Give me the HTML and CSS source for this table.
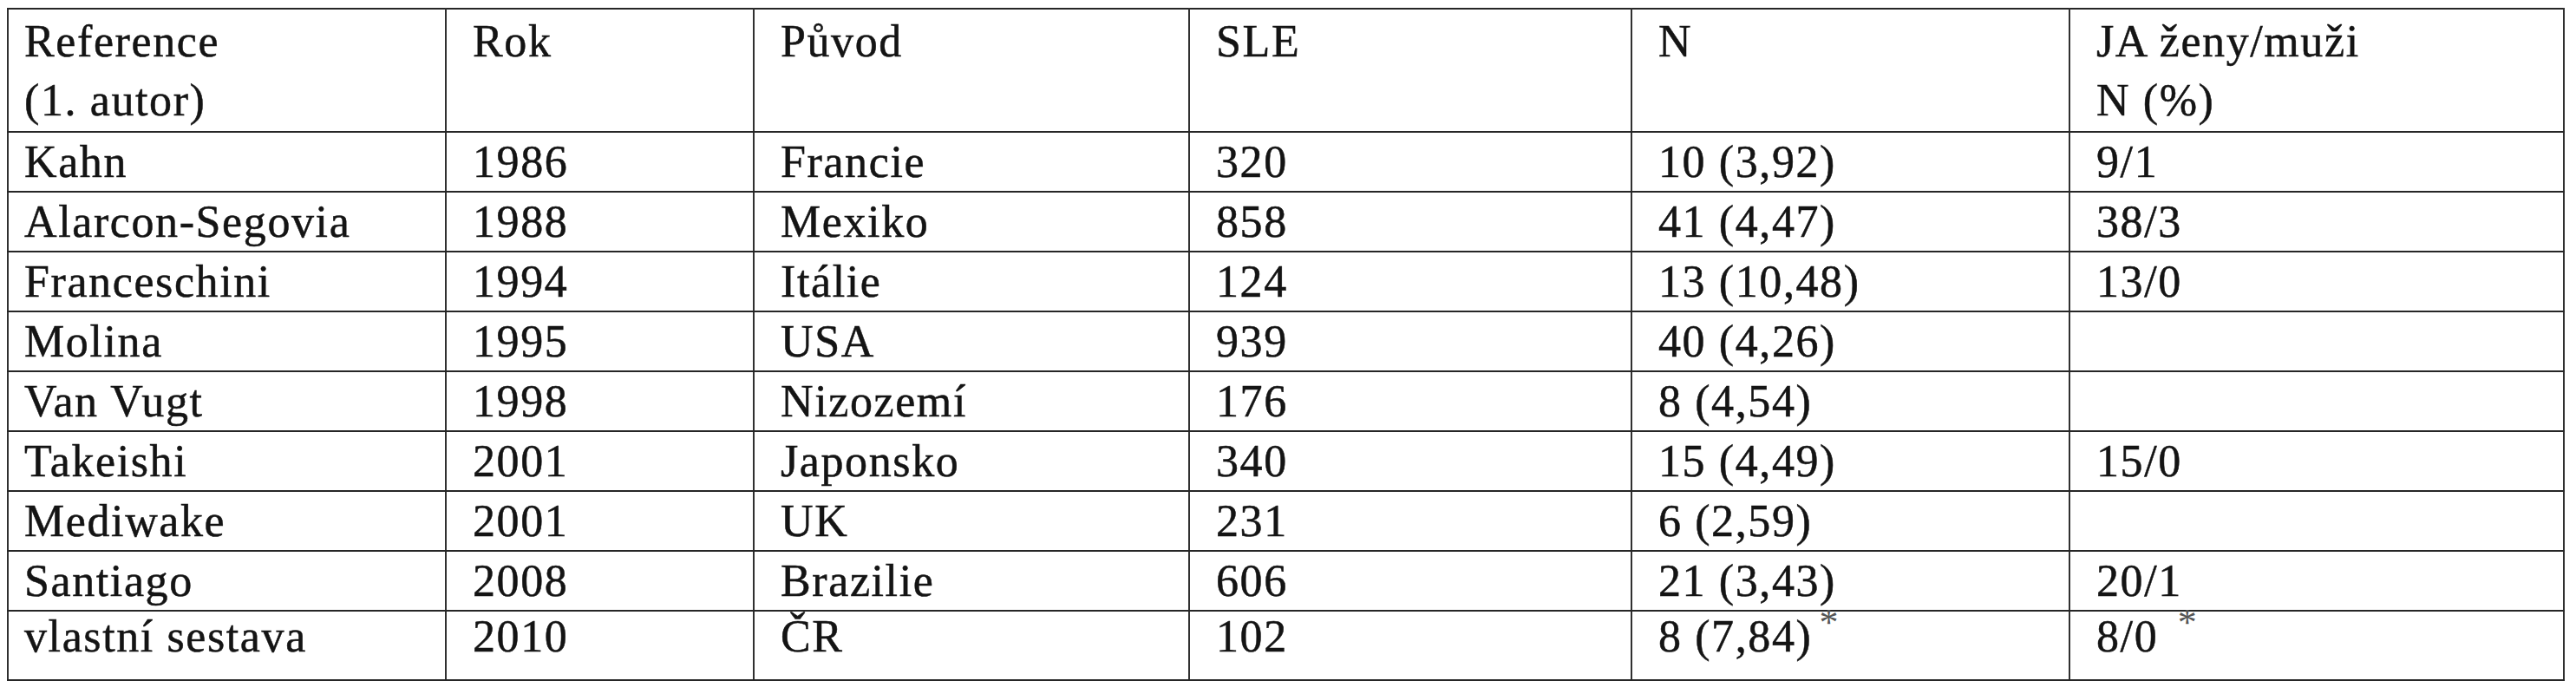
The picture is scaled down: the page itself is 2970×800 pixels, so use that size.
FILE: index.html
```html
<!DOCTYPE html>
<html lang="cs">
<head>
<meta charset="utf-8">
<title>Tabulka</title>
<link rel="stylesheet" href="styles.css">
</head>
<body>
<div class="wrap">
<table class="data">
  <colgroup>
    <col class="c-ref"><col class="c-rok"><col class="c-puvod"><col class="c-sle"><col class="c-n"><col class="c-ja">
  </colgroup>
  <thead>
    <tr>
      <th>Reference<br>(1. autor)</th>
      <th>Rok</th>
      <th>Původ</th>
      <th>SLE</th>
      <th>N</th>
      <th>JA ženy/muži<br>N (%)</th>
    </tr>
  </thead>
  <tbody>
    <tr><td>Kahn</td><td>1986</td><td>Francie</td><td>320</td><td>10 (3,92)</td><td>9/1</td></tr>
    <tr><td>Alarcon-Segovia</td><td>1988</td><td>Mexiko</td><td>858</td><td>41 (4,47)</td><td>38/3</td></tr>
    <tr><td>Franceschini</td><td>1994</td><td>Itálie</td><td>124</td><td>13 (10,48)</td><td>13/0</td></tr>
    <tr><td>Molina</td><td>1995</td><td>USA</td><td>939</td><td>40 (4,26)</td><td></td></tr>
    <tr><td>Van Vugt</td><td>1998</td><td>Nizozemí</td><td>176</td><td>8 (4,54)</td><td></td></tr>
    <tr><td>Takeishi</td><td>2001</td><td>Japonsko</td><td>340</td><td>15 (4,49)</td><td>15/0</td></tr>
    <tr><td>Mediwake</td><td>2001</td><td>UK</td><td>231</td><td>6 (2,59)</td><td></td></tr>
    <tr><td>Santiago</td><td>2008</td><td>Brazilie</td><td>606</td><td>21 (3,43)</td><td>20/1</td></tr>
    <tr class="last"><td>vlastní sestava</td><td>2010</td><td>ČR</td><td>102</td><td>8 (7,84)<span class="ast">*</span></td><td>8/0 <span class="ast">*</span></td></tr>
  </tbody>
</table>
</div>
</body>
</html>
```

FILE: styles.css
```css
html, body {
  margin: 0;
  padding: 0;
  background: #ffffff;
}

.wrap {
  padding: 9px 0 0 8px;
}

.data {
  border-collapse: collapse;
  table-layout: fixed;
  width: 2947px;
  font-family: "Liberation Serif", "Times New Roman", serif;
  font-size: 52px;
  letter-spacing: 1.6px;
  color: #141414;
  -webkit-text-stroke: 0.5px #141414;
  border: 2px solid #262626;
}

.c-ref { width: 505px; }
.c-rok { width: 355px; }
.c-puvod { width: 502px; }
.c-sle { width: 510px; }
.c-n { width: 505px; }
.c-ja { width: 570px; }

.data th,
.data td {
  text-align: left;
  vertical-align: top;
  font-weight: normal;
  padding: 0 0 0 30px;
  line-height: 67px;
  border-top: 2px solid #262626;
  border-bottom: 2px solid #262626;
  border-left: 2px solid #303030;
  border-right: 2px solid #303030;
  white-space: nowrap;
}

.data th:first-child,
.data td:first-child {
  padding-left: 18px;
}

.data th {
  line-height: 68px;
  padding-top: 3px;
  padding-bottom: 1px;
}

.data tr.last td {
  line-height: 58px;
  padding-bottom: 20px;
}

.ast {
  display: inline-block;
  font-size: 44px;
  line-height: 0;
  vertical-align: 19px;
  color: #555555;
  -webkit-text-stroke: 0;
  margin-left: 8px;
  letter-spacing: 0;
}
```
